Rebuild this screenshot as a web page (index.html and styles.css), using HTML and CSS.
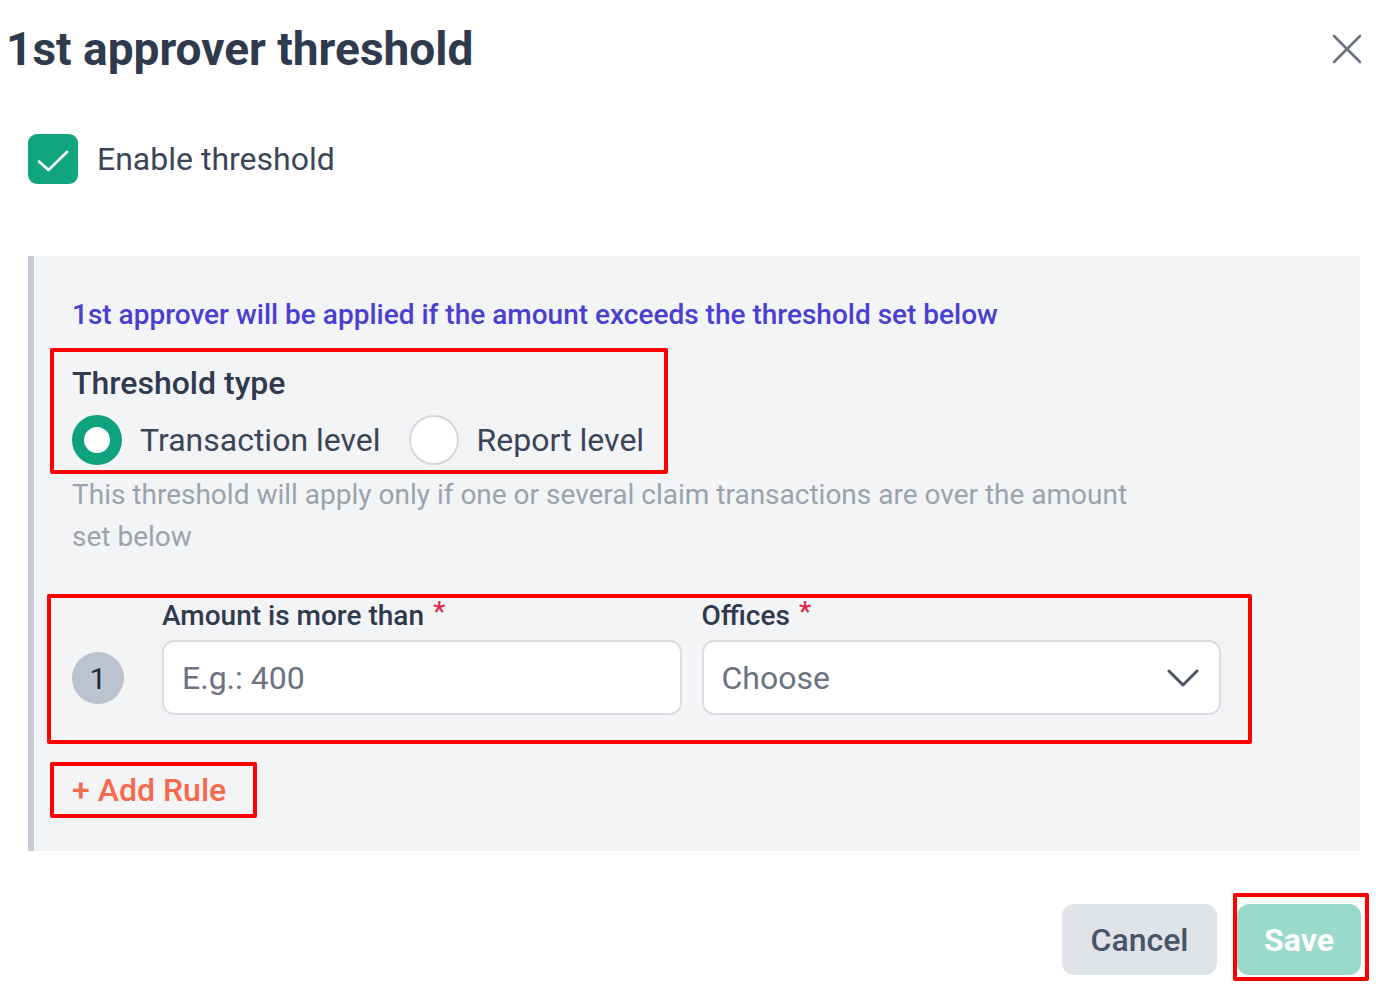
FILE: index.html
```html
<!DOCTYPE html>
<html lang="en">
<head>
<meta charset="utf-8">
<title>1st approver threshold</title>
<link rel="stylesheet" href="styles.css">
</head>
<body>
<div class="dialog">
  <div class="header">
    <h1 class="title">1st approver threshold</h1>
    <button class="close" aria-label="Close">
      <svg width="30" height="30" viewBox="0 0 30 30"><path d="M2 2 L28 28 M28 2 L2 28" stroke="#6b7280" stroke-width="2.6" stroke-linecap="round" fill="none"/></svg>
    </button>
  </div>

  <label class="enable">
    <span class="checkbox">
      <svg width="50" height="50" viewBox="0 0 50 50"><path d="M11 27.5 L20.5 36 L39 18" stroke="#fff" stroke-width="2.6" stroke-linecap="round" stroke-linejoin="round" fill="none"/></svg>
    </span>
    <span class="enable-text">Enable threshold</span>
  </label>

  <div class="panel">
    <p class="info">1st approver will be applied if the amount exceeds the threshold set below</p>

    <div class="hl hl-type">
      <div class="type-title">Threshold type</div>
      <div class="radios">
        <span class="radio radio-on"></span>
        <span class="radio-label">Transaction level</span>
        <span class="radio radio-off"></span>
        <span class="radio-label">Report level</span>
      </div>
    </div>

    <p class="helper">This threshold will apply only if one or several claim transactions are over the amount set below</p>

    <div class="hl hl-rule">
      <span class="num">1</span>
      <div class="field">
        <div class="field-label">Amount is more than <span class="req">*</span></div>
        <div class="input"><span class="placeholder">E.g.: 400</span></div>
      </div>
      <div class="field">
        <div class="field-label">Offices <span class="req">*</span></div>
        <div class="input select">
          <span class="placeholder">Choose</span>
          <svg width="32" height="18" viewBox="0 0 32 18"><path d="M2 2 L16 16 L30 2" stroke="#4b5563" stroke-width="3" stroke-linecap="round" stroke-linejoin="round" fill="none"/></svg>
        </div>
      </div>
    </div>

    <div class="hl hl-add">
      <span class="add">+ Add Rule</span>
    </div>
  </div>

  <div class="footer">
    <button class="btn btn-cancel">Cancel</button>
    <span class="hl hl-save"><button class="btn btn-save">Save</button></span>
  </div>
</div>
</body>
</html>
```

FILE: styles.css
```css
* { box-sizing: border-box; }
html, body { margin: 0; padding: 0; background: #ffffff; }
body {
  font-family: Roboto, "Noto Sans", Arial, sans-serif;
  color: #374151;
  width: 1376px;
  height: 996px;
  overflow: hidden;
}
.dialog { display: flex; flex-direction: column; }

.header {
  display: flex;
  align-items: center;
  justify-content: space-between;
  padding: 24px 14px 0 6px;
}
.title {
  margin: 0;
  font-size: 46px;
  line-height: 50px;
  font-weight: 700;
  color: #2f3b4c;
}
.close {
  border: 0;
  background: transparent;
  padding: 0;
  width: 30px;
  height: 30px;
  display: flex;
}

.enable {
  display: flex;
  align-items: center;
  gap: 19px;
  margin: 60px 0 0 28px;
}
.checkbox {
  width: 50px;
  height: 50px;
  border-radius: 9px;
  background: #10a47f;
  display: flex;
}
.enable-text {
  font-size: 32px;
  color: #3a4657;
}

.panel {
  margin: 72px 16px 0 28px;
  background: #f3f4f6;
  border-left: 6px solid #c6ccd4;
  padding: 41px 0 33px 38px;
  display: flex;
  flex-direction: column;
  align-items: flex-start;
}
.info {
  margin: 0;
  font-size: 28px;
  line-height: 36px;
  font-weight: 500;
  color: #4b3fcf;
}

.hl { border: 4px solid #ff0000; border-radius: 2px; }

.hl-type {
  margin: 15px 0 0 -22px;
  padding: 13px 20px 5px 18px;
}
.type-title {
  font-size: 32px;
  line-height: 36px;
  font-weight: 500;
  color: #2f3b4c;
}
.radios {
  display: flex;
  align-items: center;
  margin-top: 14px;
}
.radio {
  width: 50px;
  height: 50px;
  border-radius: 50%;
  background: #fff;
  flex: none;
}
.radio-on { border: 12px solid #0ea27d; }
.radio-off { border: 2px solid #d4d8de; margin-left: 28px; }
.radio-label {
  font-size: 32px;
  color: #3a4657;
  margin-left: 18px;
}

.helper {
  margin: 0;
  width: 1080px;
  font-size: 28px;
  line-height: 42px;
  color: #9ba3ae;
}

.hl-rule {
  margin: 36px 0 0 -25px;
  width: 1205px;
  padding: 2px 27px 25px 21px;
  display: flex;
  align-items: flex-end;
}
.num {
  width: 52px;
  height: 52px;
  border-radius: 50%;
  background: #bac3ce;
  color: #1f2a3a;
  font-size: 30px;
  display: flex;
  align-items: center;
  justify-content: center;
  margin: 0 38px 11px 0;
  flex: none;
}
.field { display: flex; flex-direction: column; flex: 1; }
.field + .field { margin-left: 20px; }
.field-label {
  font-size: 28px;
  line-height: 32px;
  font-weight: 500;
  color: #2f3b4c;
}
.req { color: #e0284a; margin-left: 2px; position: relative; top: -4px; }
.input {
  margin-top: 8px;
  height: 75px;
  background: #fff;
  border: 2px solid #dadde3;
  border-radius: 12px;
  display: flex;
  align-items: center;
  padding: 0 20px 0 18px;
}
.placeholder { font-size: 32px; color: #6b7280; }
.select { justify-content: space-between; }

.hl-add {
  margin: 18px 0 0 -22px;
  height: 56px;
  width: 207px;
  display: flex;
  align-items: center;
  padding-left: 18px;
}
.add {
  font-size: 32px;
  color: #f5694c;
  font-weight: 500;
}

.footer {
  display: flex;
  justify-content: flex-end;
  align-items: flex-start;
  margin-top: 42px;
  padding-right: 7px;
}
.btn {
  border: 0;
  font-family: inherit;
  font-size: 32px;
  font-weight: 500;
  height: 71px;
  border-radius: 12px;
  cursor: pointer;
}
.btn-cancel {
  margin-top: 11px;
  margin-right: 16px;
  width: 155px;
  background: #e0e3e8;
  color: #485568;
}
.hl-save {
  display: flex;
  padding: 7px 4px 2px 0;
}
.btn-save {
  width: 124px;
  background: #9adacb;
  color: #ffffff;
  font-weight: 700;
}
```
